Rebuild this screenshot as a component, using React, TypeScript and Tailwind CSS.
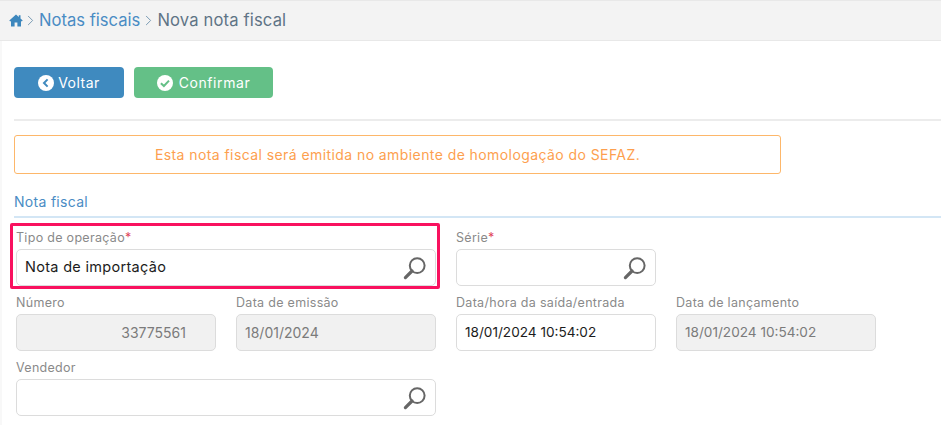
import { ChevronRight } from 'lucide-react'

function HomeIcon() {
  return (
    <svg className="w-[14px] h-[13px] text-[#3d87bd]" viewBox="0 0 14 13" fill="currentColor">
      <path d="M7 0.5 L0.3 6.6 L1.2 7.5 L2 6.9 V12.6 H5.6 V8.4 H8.4 V12.6 H12 V6.9 L12.8 7.5 L13.7 6.6 L11.5 4.6 V1.2 H9.8 V3.1 Z" />
    </svg>
  )
}

function BackIcon() {
  return (
    <svg className="w-4 h-4" viewBox="0 0 16 16">
      <circle cx="8" cy="8" r="8" fill="#fff" />
      <path d="M9.6 4.4 L6 8 L9.6 11.6" fill="none" stroke="#3f8abf" strokeWidth="2" />
    </svg>
  )
}

function CheckIcon() {
  return (
    <svg className="w-4 h-4" viewBox="0 0 16 16">
      <circle cx="8" cy="8" r="8" fill="#fff" />
      <path d="M3.9 8.2 L6.9 11 L12 5.6" fill="none" stroke="#64c087" strokeWidth="2" />
    </svg>
  )
}

function SearchIcon() {
  return (
    <svg className="w-6 h-6" viewBox="0 0 24 24" fill="none">
      <circle cx="14.2" cy="9.6" r="7.4" stroke="#666" strokeWidth="2" />
      <path d="M9 15 L2.4 21.6" stroke="#666" strokeWidth="3.2" strokeLinecap="round" />
    </svg>
  )
}

function Field({ label, required, value, disabled, search, right, valueClass }: { label: string; required?: boolean; value?: string; disabled?: boolean; search?: boolean; right?: boolean; valueClass?: string }) {
  return (
    <div>
      <label className="block h-[22px] text-[12.5px] leading-[22px] tracking-[0.3px] text-[#8a8a8a]">
        {label}
        {required && <span className="text-[#e0455a]">*</span>}
      </label>
      <div className={`h-[37px] rounded-[5px] border border-[#dcdcdc] flex items-center justify-between pl-2 pr-2 text-[14px] ${disabled ? 'bg-[#f1f1f1] text-[#7b7b7b]' : 'bg-white text-[#1c1c1c]'}`}>
        <span className={`${right ? 'ml-auto mr-[21px]' : ''} ${valueClass ?? ''}`}>{value}</span>
        {search && <SearchIcon />}
      </div>
    </div>
  )
}

export default function App() {
  return (
    <div className="w-[941px] h-[425px] overflow-hidden bg-white font-['Inter','Noto_Sans',sans-serif]">
      {/* Breadcrumb */}
      <div className="h-[41px] bg-[#f3f3f3] border-y border-[#e8e8e8] flex items-center pl-[9px] text-[16.6px]">
        <HomeIcon />
        <ChevronRight className="w-[17px] h-[17px] text-[#6f93ad] ml-[-1px]" strokeWidth={1.3} />
        <span className="text-[#4a8cc4]">Notas fiscais</span>
        <ChevronRight className="w-[17px] h-[17px] text-[#6f93ad]" strokeWidth={1.3} />
        <span className="text-[#5f7486] tracking-[0.15px]">Nova nota fiscal</span>
      </div>

      <div className="pl-[12px] border-l-2 border-[#f8f8f8] h-[384px]">
        {/* Actions */}
        <div className="flex gap-[10px] pt-[26px]">
          <button className="w-[110px] h-[31px] rounded-[4px] bg-[#3f8abf] text-white text-[14px] tracking-[0.5px] flex items-center justify-center gap-1">
            <BackIcon /> Voltar
          </button>
          <button className="w-[139px] h-[31px] rounded-[4px] bg-[#64c087] text-white text-[14px] tracking-[0.6px] flex items-center justify-center gap-[6px]">
            <CheckIcon /> Confirmar
          </button>
        </div>

        <div className="mt-[21px] h-[2px] bg-[#ececec]" />

        {/* Alert */}
        <div className="mt-[14px] w-[767px] h-[39px] rounded-[3px] border-[1.5px] border-[#fdb76a] flex items-center justify-center text-[14px] tracking-[0.42px] text-[#fd9f4f]">
          Esta nota fiscal será emitida no ambiente de homologação do SEFAZ.
        </div>

        {/* Form */}
        <div className="mt-[18px] h-[24px] text-[14px] leading-[20px] tracking-[0.3px] text-[#4a8cc4] border-b-2 border-[#d3e6f5] box-content pb-0">
          Nota fiscal
        </div>

        <div className="mt-[9px] ml-[2px] grid grid-cols-[200px_200px_200px_200px] gap-x-5 gap-y-[6px]">
          <div className="col-span-2 relative">
            <div className="absolute left-[-6px] right-[-4px] top-[-4px] bottom-[-3px] border-[3px] border-[#f9115f] rounded-[2px]" />
            <Field label="Tipo de operação" required value="Nota de importação" search valueClass="text-[14.5px] tracking-[0.3px] mt-[-2px]" />
          </div>
          <div className="col-span-2 w-[200px]">
            <Field label="Série" required search />
          </div>
          <Field label="Número" value="33775561" disabled right />
          <Field label="Data de emissão" value="18/01/2024" disabled />
          <Field label="Data/hora da saída/entrada" value="18/01/2024 10:54:02" valueClass="text-[13.6px]" />
          <Field label="Data de lançamento" value="18/01/2024 10:54:02" disabled valueClass="text-[13.6px]" />
          <div className="col-span-2">
            <Field label="Vendedor" search />
          </div>
        </div>
      </div>
    </div>
  )
}
